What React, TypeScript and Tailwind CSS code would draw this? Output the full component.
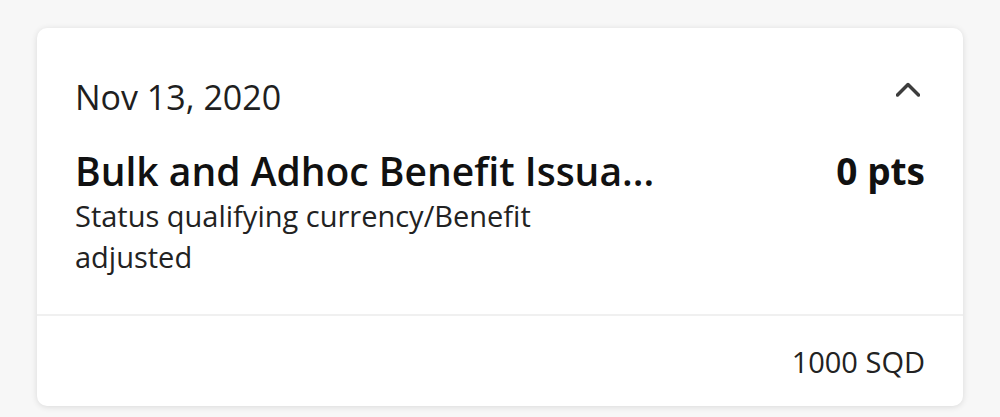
import React from "react";

export default function App() {
  return (
    <div className="min-h-screen bg-[#f7f7f7] px-[37px] pt-[28px] font-['Open_Sans',sans-serif]">
      <div className="rounded-[10px] bg-white shadow-[0_1px_6px_rgba(0,0,0,0.12)]">
        <div className="px-[38px] pt-[49px] pb-[37px]">
          <div className="flex items-start justify-between">
            <p className="text-[34px] leading-[40px] text-[#1f1f1f]">Nov 13, 2020</p>
            <svg
              width="24"
              height="24"
              viewBox="0 0 24 24"
              fill="none"
              className="mt-px mr-[5px]"
            >
              <polyline
                points="1.5,17 12,6.5 22.5,17"
                stroke="#3d3d3d"
                strokeWidth="3.5"
                strokeLinecap="round"
                strokeLinejoin="round"
              />
            </svg>
          </div>
          <div className="mt-[32px] flex items-start justify-between gap-8">
            <div className="min-w-0">
              <p className="whitespace-nowrap text-[39px] font-semibold leading-[44px] text-[#111]">
                Bulk and Adhoc Benefit Issua...
              </p>
              <p className="mt-[2px] max-w-[480px] text-[29px] leading-[41px] text-[#222]">
                Status qualifying currency/Benefit adjusted
              </p>
            </div>
            <p className="shrink-0 text-[37px] font-bold leading-[44px] text-[#111]">0 pts</p>
          </div>
        </div>
        <div className="flex justify-end border-t-2 border-[#f0f0f0] px-[38px] pt-[26px] pb-[24px]">
          <p className="text-[29px] leading-[40px] text-[#222]">1000 SQD</p>
        </div>
      </div>
    </div>
  );
}
